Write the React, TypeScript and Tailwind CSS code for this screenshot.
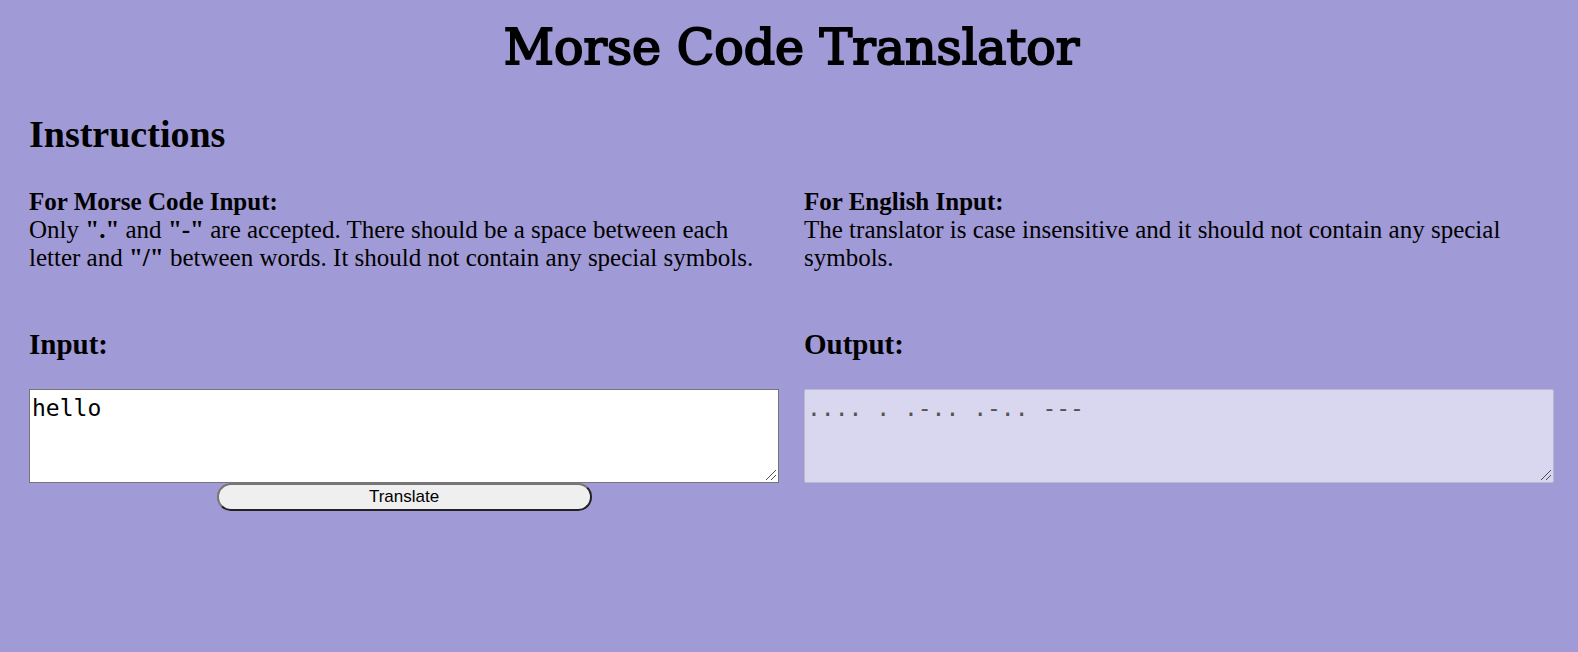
import { useState } from "react";
import type { ComponentProps } from "react";

const MORSE: Record<string, string> = {
  a: ".-", b: "-...", c: "-.-.", d: "-..", e: ".", f: "..-.", g: "--.", h: "....", i: "..",
  j: ".---", k: "-.-", l: ".-..", m: "--", n: "-.", o: "---", p: ".--.", q: "--.-", r: ".-.",
  s: "...", t: "-", u: "..-", v: "...-", w: ".--", x: "-..-", y: "-.--", z: "--..",
  "0": "-----", "1": ".----", "2": "..---", "3": "...--", "4": "....-", "5": ".....",
  "6": "-....", "7": "--...", "8": "---..", "9": "----.", " ": "/",
};

const LETTERS = Object.fromEntries(Object.entries(MORSE).map(([letter, code]) => [code, letter]));

function translate(text: string) {
  const source = text.trim();
  if (/^[.\-/\s]+$/.test(source)) {
    return source.split(/\s+/).map((code) => LETTERS[code] ?? "").join("");
  }
  return [...source.toLowerCase()].map((letter) => MORSE[letter] ?? "").join(" ");
}

function TextBox({ className, ...props }: ComponentProps<"textarea">) {
  return (
    <div className="relative flex">
      <textarea
        rows={3}
        spellCheck={false}
        className={`w-full resize-y border px-0.5 py-1 font-['DejaVu_Sans_Mono',monospace] text-[23px] leading-7 [&::-webkit-resizer]:bg-transparent ${className}`}
        {...props}
      />
      <svg
        aria-hidden="true"
        viewBox="0 0 12 12"
        className="pointer-events-none absolute right-0.5 bottom-0.5 size-3 text-[#3c3c3c]"
      >
        <path d="M1 11 11 1M6 11l5-5" fill="none" stroke="currentColor" strokeWidth="0.9" />
      </svg>
    </div>
  );
}

export default function App() {
  const [input, setInput] = useState("hello");
  const [output, setOutput] = useState(translate("hello"));

  return (
    <main className="min-h-screen bg-[#a09ad6] pt-5 pr-6 pb-8 pl-[29px] font-['Liberation_Serif',serif] text-[25px] leading-7 text-black">
      <h1 className="text-center font-['DejaVu_Serif',serif] text-[49px] leading-[56px] font-normal [-webkit-text-stroke:2px_black]">
        Morse Code Translator
      </h1>

      <h2 className="mt-9 text-[38px] leading-11 font-bold">Instructions</h2>
      <div className="mt-8 grid grid-cols-2 gap-[25px]">
        <section>
          <h3 className="font-bold">For Morse Code Input:</h3>
          <p>
            Only <b>"."</b> and <b>"-"</b> are accepted. There should be a space between each letter and{" "}
            <b>"/"</b> between words. It should not contain any special symbols.
          </p>
        </section>
        <section>
          <h3 className="font-bold">For English Input:</h3>
          <p>The translator is case insensitive and it should not contain any special symbols.</p>
        </section>
      </div>

      <div className="mt-14 grid grid-cols-2 items-start gap-[25px]">
        <div className="flex flex-col">
          <label htmlFor="input" className="mb-[29px] text-[29px] leading-8 font-bold">
            Input:
          </label>
          <TextBox
            id="input"
            value={input}
            onChange={(event) => setInput(event.target.value)}
            className="border-[#767676] bg-white"
          />
          <button
            type="button"
            onClick={() => setOutput(translate(input))}
            className="h-7 w-1/2 self-center rounded-full border-2 border-t-[#767676] border-r-[#212121] border-b-[#212121] border-l-[#767676] bg-[#efefef] font-['Liberation_Sans',sans-serif] text-[17px] leading-6"
          >
            Translate
          </button>
        </div>
        <div className="flex flex-col">
          <label htmlFor="output" className="mb-[29px] text-[29px] leading-8 font-bold">
            Output:
          </label>
          <TextBox
            id="output"
            disabled
            value={output}
            className="rounded-xs border-[#767676]/30 bg-white/60 text-[#545454]"
          />
        </div>
      </div>
    </main>
  );
}
